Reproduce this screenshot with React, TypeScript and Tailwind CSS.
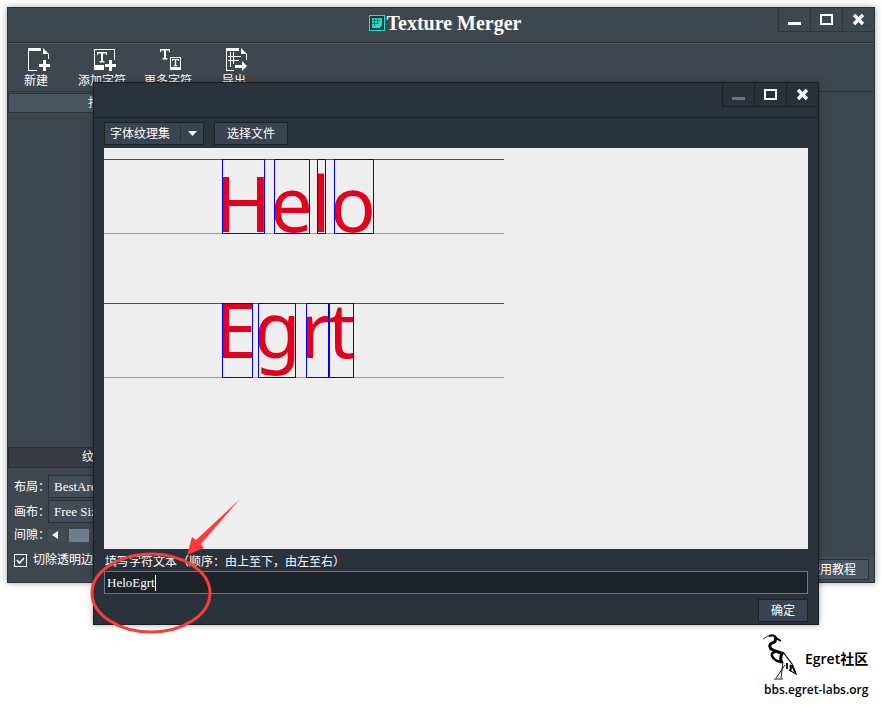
import React from "react";

const cjk = "font-['Liberation_Sans','Noto_Sans_CJK_SC',sans-serif]";
const serif = "font-['Liberation_Serif','Noto_Sans_CJK_SC',serif]";

function WindowControls({ dark = false }: { dark?: boolean }) {
  const edge = dark ? "border-[#1b2127]" : "border-[#2f353b]";
  const cell = `flex h-full w-8 items-center justify-center border-l ${edge}`;
  return (
    <div className={`flex h-6 border-b ${edge} ${dark ? "bg-[#293139]" : ""}`}>
      <button aria-label="Minimize" className={cell} disabled={dark}>
        <svg width="14" height="14" viewBox="0 0 14 14" shapeRendering="crispEdges">
          <rect x="0" y="9" width="13" height="3" fill={dark ? "#6d7378" : "#fff"} />
        </svg>
      </button>
      <button aria-label="Maximize" className={cell}>
        <svg width="14" height="12" viewBox="0 0 14 12" shapeRendering="crispEdges">
          <rect x="1" y="1" width="11" height="9" fill="none" stroke="#fff" strokeWidth="2" />
        </svg>
      </button>
      <button aria-label="Close" className={cell}>
        <svg width="13" height="13" viewBox="0 0 13 13">
          <path d="M2 2L11 11M11 2L2 11" stroke="#fff" strokeWidth="3.4" />
        </svg>
      </button>
    </div>
  );
}

function LetterMark({ x, y, s }: { x: number; y: number; s: number }) {
  return (
    <path
      transform={`translate(${x} ${y}) scale(${s})`}
      d="M0 0H10V3H8.8V1.6H6V9H7.4V10.4H2.6V9H4V1.6H1.2V3H0Z"
      fill="#fff"
    />
  );
}

const tools = [
  {
    label: "新建",
    icon: (
      <>
        <path d="M1 0H14V3H2V22H10V23H1Z" />
        <path d="M16 0L22 6H16ZM21 6H22V11H21Z" />
        <path d="M16 12H19V16H23V19H19V23H16V19H12V16H16Z" />
      </>
    ),
  },
  {
    label: "添加字符",
    icon: (
      <>
        <path d="M1 1H22V12H21V2H2V17H11V22H1Z" />
        <LetterMark x={4} y={4} s={1} />
        <path d="M16 12H19V16H23V19H19V23H16V19H12V16H16Z" />
      </>
    ),
  },
  {
    label: "更多字符",
    icon: (
      <>
        <LetterMark x={1} y={1} s={1} />
        <path d="M11 9H22V22H11ZM12 10V19H21V10Z" fillRule="evenodd" />
        <LetterMark x={13} y={11} s={0.7} />
      </>
    ),
  },
  {
    label: "导出",
    icon: (
      <>
        <path d="M1 0H14V3H2V22H9V23H1Z" />
        <path d="M16 0L22 6H16ZM21 6H22V12H21Z" />
        <path d="M5 4H6V19H5ZM8 4H9V16H8ZM3 8H16V9H3ZM3 12H14V13H3Z" />
        <path d="M10 17H17V13L22 18L17 23V20H10Z" />
      </>
    ),
  },
];

const glyphRows = [
  {
    top: 11,
    base: 84,
    glyphs: [
      { c: "H", x: 118, w: 43, lsb: 7 },
      { c: "e", x: 170, w: 36, lsb: 4 },
      { c: "l", x: 213, w: 9, lsb: 6 },
      { c: "o", x: 230, w: 40, lsb: 4 },
    ],
  },
  {
    top: 155,
    base: 210,
    glyphs: [
      { c: "E", x: 118, w: 31, lsb: 7 },
      { c: "g", x: 154, w: 38, lsb: 4 },
      { c: "r", x: 202, w: 23, lsb: 6 },
      { c: "t", x: 225, w: 25, lsb: 1 },
    ],
  },
];

function TextureCanvas() {
  return (
    <svg className="block h-[401px] w-full bg-[#eee]" aria-label="HeloEgrt">
      {glyphRows.map((row) => (
        <g key={row.top}>
          {row.glyphs.map((g) => (
            <text
              key={g.c}
              x={g.x - g.lsb}
              y={row.base}
              fill="#e1001e"
              className="font-['Noto_Sans',sans-serif] text-[76px]"
            >
              {g.c}
            </text>
          ))}
          <g shapeRendering="crispEdges">
            <rect x="0" y={row.top} width="400" height="1" fill="#f00" />
            <rect x="0" y={row.top + 74} width="400" height="1" fill="#0f0" />
            {row.glyphs.map((g) => (
              <rect
                key={g.c}
                x={g.x + 0.5}
                y={row.top + 0.5}
                width={g.w - 1}
                height="74"
                fill="none"
                stroke="#00f"
              />
            ))}
          </g>
        </g>
      ))}
    </svg>
  );
}

function Field({ id, label, value }: { id: string; label: string; value: string }) {
  return (
    <div className="flex items-center gap-1">
      <label htmlFor={id} className="w-[30px] whitespace-nowrap">{label}</label>
      <select
        id={id}
        className={`h-[23px] flex-1 appearance-none border border-[#2b3137] bg-[#434d57] px-[5px] text-[13px] ${serif}`}
      >
        <option>{value}</option>
      </select>
    </div>
  );
}

function MainWindow() {
  return (
    <main className="flex h-[576px] flex-col border border-[#2a2f35] bg-[#3f474e] shadow-[0_0_7px_rgba(0,0,0,0.35)]">
      <header className="grid h-[35px] grid-cols-[1fr_auto_1fr] border-b border-[#2f353a]">
        <span />
        <h1 className={`flex items-center pb-1 pl-2 text-[20px] leading-7 font-bold ${serif}`}>
          <svg width="17" height="17" viewBox="0 0 17 17" className="mr-px" shapeRendering="crispEdges">
            <rect x="0.5" y="0.5" width="15" height="15" fill="#203a40" stroke="#1fe0cc" />
            <path d="M3 3H13V10L10 13H3Z" fill="#1fe0c0" />
            <path d="M5 3V11M8 3V9M3 5H11M3 8H10" stroke="#12806f" />
          </svg>
          Texture Merger
        </h1>
        <div className="justify-self-end">
          <WindowControls />
        </div>
      </header>
      <nav className="flex h-[49px] gap-[10px] border-t border-b border-t-[#50565b] border-b-[#2f353a] pt-1">
        {tools.map((t) => (
          <button key={t.label} className="flex w-14 flex-col items-center whitespace-nowrap">
            <svg width="23" height="24" viewBox="0 0 23 24" fill="#fff" className="ml-1">
              {t.icon}
            </svg>
            <span className="leading-[18px]">{t.label}</span>
          </button>
        ))}
      </nav>
      <div className="flex flex-1">
        <aside className="flex w-[196px] flex-col pt-px">
          <h2 className="h-5 border border-[#2f353b] bg-[#4b5561] text-center leading-[18px]">打图集</h2>
          <div className="flex-1" />
          <h2 className="h-[21px] border border-[#2b3035] bg-[#383c42] text-center leading-[18px]">纹理设置</h2>
          <form className="flex h-[114px] flex-col gap-[2px] px-[6px] pt-[7px]">
            <Field id="layout" label="布局：" value="BestArea" />
            <Field id="canvas" label="画布：" value="Free Size" />
            <div className="flex h-5 items-center gap-1">
              <span className="w-[30px] whitespace-nowrap">间隙：</span>
              <button type="button" aria-label="Decrease" className="flex h-[13px] w-[17px] items-center bg-[#434d57] pl-1">
                <svg width="6" height="8" viewBox="0 0 6 8"><path d="M6 0V8L0 4Z" fill="#fff" /></svg>
              </button>
              <span className="h-[13px] w-5 bg-[#6d7d8d]" />
            </div>
            <label className="flex h-[26px] items-center gap-[6px]">
              <input type="checkbox" defaultChecked className="peer sr-only" />
              <svg width="13" height="13" viewBox="0 0 13 13" fill="none" stroke="#fff">
                <rect x="0.5" y="0.5" width="12" height="12" />
                <path d="M3 6L5.500 9L10 4" strokeWidth="1.500" />
              </svg>
              切除透明边
            </label>
          </form>
        </aside>
        <section className="flex flex-1 flex-col justify-end">
          <footer className="flex h-[25px] justify-end bg-[#434e56] px-[5px] pt-[2px]">
            <button className="h-[21px] border border-[#2b3137] bg-[#4a5562] px-3">使用教程</button>
          </footer>
        </section>
      </div>
    </main>
  );
}

function FontDialog() {
  const button = "h-[23px] border border-[#1b2127] bg-[#384451]";
  return (
    <section
      role="dialog"
      className="absolute top-[82px] right-[63px] left-[93px] flex flex-col border border-[#191f25] bg-[#2a323b] shadow-[0_0_6px_rgba(0,0,0,0.35)]"
    >
      <header className="flex h-[35px] justify-end border-b border-[#1b2127]">
        <WindowControls dark />
      </header>
      <div className="flex flex-col px-[10px] pt-1 pb-[2px]">
        <div className="flex gap-[10px]">
          <div className="relative">
            <select aria-label="类型" className={`${button} w-[100px] appearance-none px-[5px]`}>
              <option>字体纹理集</option>
            </select>
            <svg className="pointer-events-none absolute top-1 right-1" width="20" height="15" viewBox="0 0 20 15">
              <path d="M0.500 0V15" stroke="#27303a" />
              <path d="M8 5H17L12.500 10Z" fill="#fff" />
            </svg>
          </div>
          <button className={`${button} w-[74px]`}>选择文件</button>
        </div>
        <div className="mt-[3px]">
          <TextureCanvas />
        </div>
        <label htmlFor="chars" className="h-[22px] pl-px leading-[26px]">
          填写字符文本（顺序：由上至下，由左至右）
        </label>
        <div className="relative">
          <input
            id="chars"
            defaultValue="HeloEgrt"
            className={`block h-[23px] w-full border border-[#5f7a92] bg-[#1e2229] px-[2px] text-[13px] ${serif}`}
          />
          <span className="absolute top-1 left-[51px] h-4 w-px bg-white" />
        </div>
        <button className={`${button} mt-[5px] w-[50px] self-end`}>确定</button>
      </div>
    </section>
  );
}

function Annotation() {
  return (
    <svg className="pointer-events-none absolute top-[496px] left-[88px]" width="156" height="140" viewBox="88 496 156 140">
      <ellipse cx="151" cy="593" rx="59" ry="39" fill="none" stroke="#fb3c3a" strokeWidth="3" />
      <path d="M239 500L201 544L204 548L187 555L192 537L196 540Z" fill="#fb3c3a" />
    </svg>
  );
}

function Watermark() {
  return (
    <footer className="mt-[50px] ml-auto w-[112px] font-['Open_Sans','Noto_Sans_CJK_SC',sans-serif] font-bold text-black">
      <div className="flex h-[50px] items-center gap-[6px]">
        <svg width="36" height="48" viewBox="0 0 36 48" fill="none" stroke="#000">
          <path d="M0 5Q4 1 9 2" strokeWidth="0.800" />
          <path d="M6 2Q11 0 13 4L18 7" strokeWidth="2" />
          <path d="M12 3Q14 8 9 9Q5 11 8 15Q12 17 18 19" strokeWidth="3" />
          <path d="M16 18Q8 17 9 22Q12 28 20 28" strokeWidth="2.500" />
          <path d="M20 18Q16 24 19 29" strokeWidth="3" />
          <path d="M20 18L29 30L33 40L26 36" strokeWidth="1.200" />
          <path d="M24 29L24 35M27 31Q29 34 27 37M29 31L32 38" strokeWidth="1.800" />
          <path d="M20 28L18 44M22 31L13 44M11 45H20" strokeWidth="0.900" />
        </svg>
        <span className="text-[14px] font-semibold whitespace-nowrap">Egret社区</span>
      </div>
      <p className="pl-px text-[12px] leading-[14px] font-semibold whitespace-nowrap">bbs.egret-labs.org</p>
    </footer>
  );
}

export default function App() {
  return (
    <div className={`relative min-h-screen bg-white p-[7px] text-[12px] text-white ${cjk}`}>
      <MainWindow />
      <FontDialog />
      <Annotation />
      <Watermark />
    </div>
  );
}
